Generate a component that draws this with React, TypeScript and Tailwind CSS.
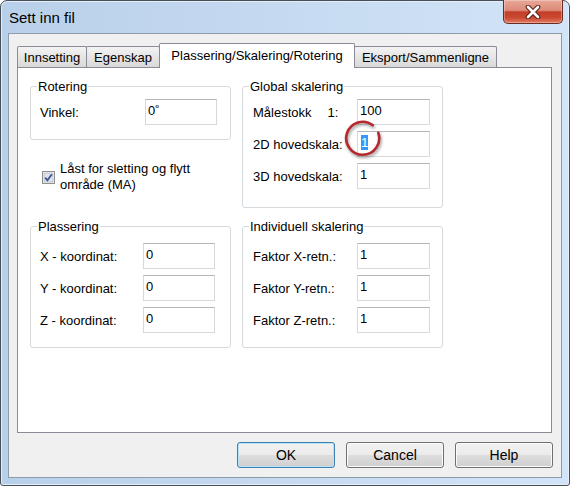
import type { ReactNode } from "react";

const FONT = { fontFamily: '"Liberation Sans", Arial, sans-serif' };

function Group({ title, children }: { title: string; children: ReactNode }) {
  return (
    <fieldset className="w-[201px] rounded-[3px] border border-[#d5dadf]">
      <legend className="ml-[6px] px-[1px] text-[13px] leading-[15px]">{title}</legend>
      {children}
    </fieldset>
  );
}

function Box({ value, w, selected }: { value: string; w: string; selected?: boolean }) {
  return (
    <div
      className={`relative flex h-[26px] ${w} items-start border border-[#d6d9dd] border-t-[#b3b6ba] bg-white pl-[2px] pt-[3px] text-[13px] leading-[15px]`}
    >
      {selected ? (
        <span className="ml-[1px] bg-[#3399ff] leading-[15px] text-white">{value}</span>
      ) : (
        <span>{value}</span>
      )}
      {selected ? (
        <svg
          className="pointer-events-none absolute -left-[15px] -top-[12px] h-[42px] w-[42px] drop-shadow-[1px_2px_1.5px_rgba(0,0,0,0.4)]"
          viewBox="0 0 42 42"
          fill="none"
        >
          <path
            d="M29.8 5.2 A16.5 16.5 0 1 0 35.3 12.8"
            stroke="#b7282c"
            strokeWidth="2.6"
            strokeLinecap="round"
          />
        </svg>
      ) : null}
    </div>
  );
}

function Row({
  label,
  value,
  labelW,
  boxW,
  selected,
}: {
  label: ReactNode;
  value: string;
  labelW: string;
  boxW: string;
  selected?: boolean;
}) {
  return (
    <div className="flex items-center">
      <div className={`${labelW} text-[13px] leading-[15px] whitespace-nowrap`}>{label}</div>
      <Box value={value} w={boxW} selected={selected} />
    </div>
  );
}

function Tab({ label, w, active }: { label: string; w: string; active?: boolean }) {
  if (active) {
    return (
      <div
        className={`relative z-10 -mb-px -ml-px flex h-[25px] ${w} justify-center rounded-t-[2px] border border-b-0 border-[#898c95] bg-white pt-[4px] text-[13px] leading-[15px]`}
      >
        {label}
      </div>
    );
  }
  return (
    <div
      className={`-ml-px flex h-[21px] ${w} items-center justify-center rounded-t-[2px] border border-b-0 border-[#898c95] bg-[linear-gradient(#f3f3f3,#e4e4e4_55%,#d9d9d9)] text-[13px] leading-[15px] first:ml-0`}
    >
      {label}
    </div>
  );
}

function Button({ label, primary }: { label: string; primary?: boolean }) {
  return (
    <button
      type="button"
      className={`h-[26px] w-[98px] rounded-[3px] border bg-[linear-gradient(#f2f2f2_0%,#ebebeb_48%,#dddddd_52%,#cfcfcf_100%)] text-[14px] leading-[16px] text-black ${
        primary
          ? "border-[#3c7fb1] shadow-[inset_0_0_0_1px_#b9e3fa]"
          : "border-[#707070] shadow-[inset_0_0_0_1px_#fbfbfb]"
      }`}
    >
      {label}
    </button>
  );
}

function CheckBox() {
  return (
    <svg width="13" height="13" viewBox="0 0 13 13" className="shrink-0">
      <rect x="0.5" y="0.5" width="12" height="12" fill="#f4f4f4" stroke="#8e8f8f" />
      <rect x="2" y="2" width="9" height="9" fill="#dde3ea" stroke="#aeb3b9" strokeWidth="0.6" />
      <path d="M3.2 6.6 L5.4 9.3 L9.9 3.2" stroke="#3d5593" strokeWidth="1.8" fill="none" />
    </svg>
  );
}

export default function App() {
  return (
    <div
      className="flex h-[486px] w-[570px] flex-col rounded-t-[7px] rounded-b-[3px] border border-[#494f57] bg-[linear-gradient(to_right,#b9d0ea,#c8dcf2_60%,#d2e4f7)] px-[7px] pb-[7px] text-black shadow-[inset_0_0_0_1px_#e4eef9]"
      style={FONT}
    >
      {/* title bar */}
      <div className="flex h-[32px] items-start justify-between">
        <span className="ml-[1px] mt-[8px] text-[15px] leading-[17px]">Sett inn fil</span>
        <div className="-mr-px -mt-px flex h-[24px] w-[60px] items-center justify-center rounded-b-[5px] border border-t-0 border-[#6a2b22] bg-[linear-gradient(#e9a898_0%,#dc8a78_45%,#c23f2a_52%,#c9462f_75%,#e27c61_100%)] shadow-[inset_0_0_0_1px_rgba(255,255,255,0.3)]">
          <svg width="18" height="14" viewBox="0 0 18 14">
            <path d="M4 2 L14 12 M14 2 L4 12" stroke="#5b2018" strokeWidth="4.6" strokeLinecap="round" />
            <path d="M4 2 L14 12 M14 2 L4 12" stroke="#ffffff" strokeWidth="2.6" strokeLinecap="round" />
          </svg>
        </div>
      </div>

      {/* client */}
      <div className="flex h-[445px] w-[554px] flex-col border border-[#8e9bab] bg-[#f0f0f0]">
        <div className="flex h-[33px] items-end pl-[8px]">
          <Tab label="Innsetting" w="w-[70px]" />
          <Tab label="Egenskap" w="w-[74px]" />
          <Tab label="Plassering/Skalering/Rotering" w="w-[196px]" active />
          <Tab label="Eksport/Sammenligne" w="w-[143px]" />
        </div>

        <div className="ml-[8px] flex h-[366px] w-[535px] gap-[11px] border border-[#898c95] bg-white pl-[12px] pt-[11px]">
          {/* left column */}
          <div className="flex flex-col">
            <Group title="Rotering">
              <div className="pb-[14px] pl-[9px] pt-[5px]">
                <Row label="Vinkel:" value="0˚" labelW="w-[105px]" boxW="w-[72px]" />
              </div>
            </Group>

            <div className="mt-[21px] flex items-center gap-[5px] pl-[12px] text-[13px] leading-[16px]">
              <CheckBox />
              <span>
                Låst for sletting og flytt
                <br />
                område (MA)
              </span>
            </div>

            <div className="mt-[26px]">
              <Group title="Plassering">
                <div className="flex flex-col gap-[6px] pb-[14px] pl-[9px] pt-[9px]">
                  <Row label="X - koordinat:" value="0" labelW="w-[103px]" boxW="w-[72px]" />
                  <Row label="Y - koordinat:" value="0" labelW="w-[103px]" boxW="w-[72px]" />
                  <Row label="Z - koordinat:" value="0" labelW="w-[103px]" boxW="w-[72px]" />
                </div>
              </Group>
            </div>
          </div>

          {/* right column */}
          <div className="flex flex-col">
            <Group title="Global skalering">
              <div className="flex flex-col gap-[6px] pb-[18px] pl-[10px] pt-[5px]">
                <Row
                  label={
                    <>
                      Målestokk<span className="ml-[16px]">1:</span>
                    </>
                  }
                  value="100"
                  labelW="w-[104px]"
                  boxW="w-[73px]"
                />
                <Row label="2D hovedskala:" value="1" labelW="w-[104px]" boxW="w-[73px]" selected />
                <Row label="3D hovedskala:" value="1" labelW="w-[104px]" boxW="w-[73px]" />
              </div>
            </Group>

            <div className="mt-[11px]">
              <Group title="Individuell skalering">
                <div className="flex flex-col gap-[6px] pb-[14px] pl-[10px] pt-[9px]">
                  <Row label="Faktor X-retn.:" value="1" labelW="w-[104px]" boxW="w-[73px]" />
                  <Row label="Faktor Y-retn.:" value="1" labelW="w-[104px]" boxW="w-[73px]" />
                  <Row label="Faktor Z-retn.:" value="1" labelW="w-[104px]" boxW="w-[73px]" />
                </div>
              </Group>
            </div>
          </div>
        </div>

        <div className="mt-[9px] flex justify-end gap-[11px] pr-[8px]">
          <Button label="OK" primary />
          <Button label="Cancel" />
          <Button label="Help" />
        </div>
      </div>
    </div>
  );
}
